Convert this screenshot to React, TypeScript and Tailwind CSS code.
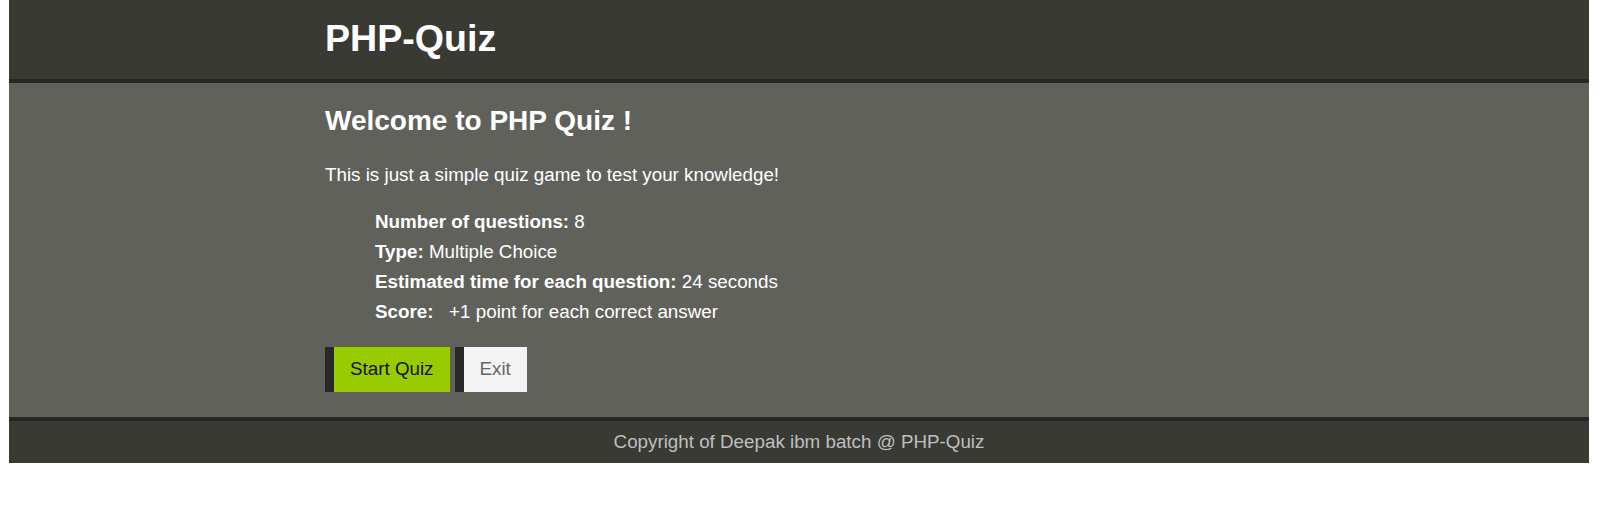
import React from 'react';

type Rule = {
  label: string;
  value: string;
};

const rules: Rule[] = [
  { label: 'Number of questions:', value: ' 8' },
  { label: 'Type:', value: ' Multiple Choice' },
  { label: 'Estimated time for each question:', value: ' 24 seconds' },
  { label: 'Score:', value: '\u00a0\u00a0 +1 point for each correct answer' },
];

function App() {
  return (
    <div
      className="ml-[9px] w-[1580px] text-white"
      style={{ fontFamily: '"Liberation Sans", Arial, sans-serif' }}
    >
      <header className="h-[79px] bg-[#3a3a35]">
        <div className="mx-auto w-[948px] pt-[20px]">
          <h1 className="text-[37.6px] leading-[37px] font-bold">PHP-Quiz</h1>
        </div>
      </header>

      <main className="bg-[#61615c] border-t-4 border-b-4 border-[#272725]">
        <div className="mx-auto w-[948px] pt-[24px] pb-[25px]">
          <h2 className="text-[28px] leading-[28px] font-bold">Welcome to PHP Quiz !</h2>
          <p className="mt-[31px] text-[18.8px] leading-[18.6px]">
            This is just a simple quiz game to test your knowledge!
          </p>
          <ul className="mt-[22px] pl-[50px] text-[18.8px]">
            {rules.map((rule) => (
              <li key={rule.label} className="leading-[30px] whitespace-pre">
                <b>{rule.label}</b>
                {rule.value}
              </li>
            ))}
          </ul>
          <div className="mt-[20px] flex gap-[5px]">
            <button className="h-[45px] flex items-center bg-[#99cc00] border-l-[9px] border-[#282826] px-[16px] text-[18.8px] text-[#111]">
              Start Quiz
            </button>
            <button className="h-[45px] flex items-center bg-[#f3f3f4] border-l-[9px] border-[#282826] px-[16px] text-[18.8px] text-[#666]">
              Exit
            </button>
          </div>
        </div>
      </main>

      <footer className="h-[42px] bg-[#3a3a35] flex items-center justify-center text-[18.8px] text-[#bfbfbf]">
        Copyright of Deepak ibm batch @ PHP-Quiz
      </footer>
    </div>
  );
}

export default App;
